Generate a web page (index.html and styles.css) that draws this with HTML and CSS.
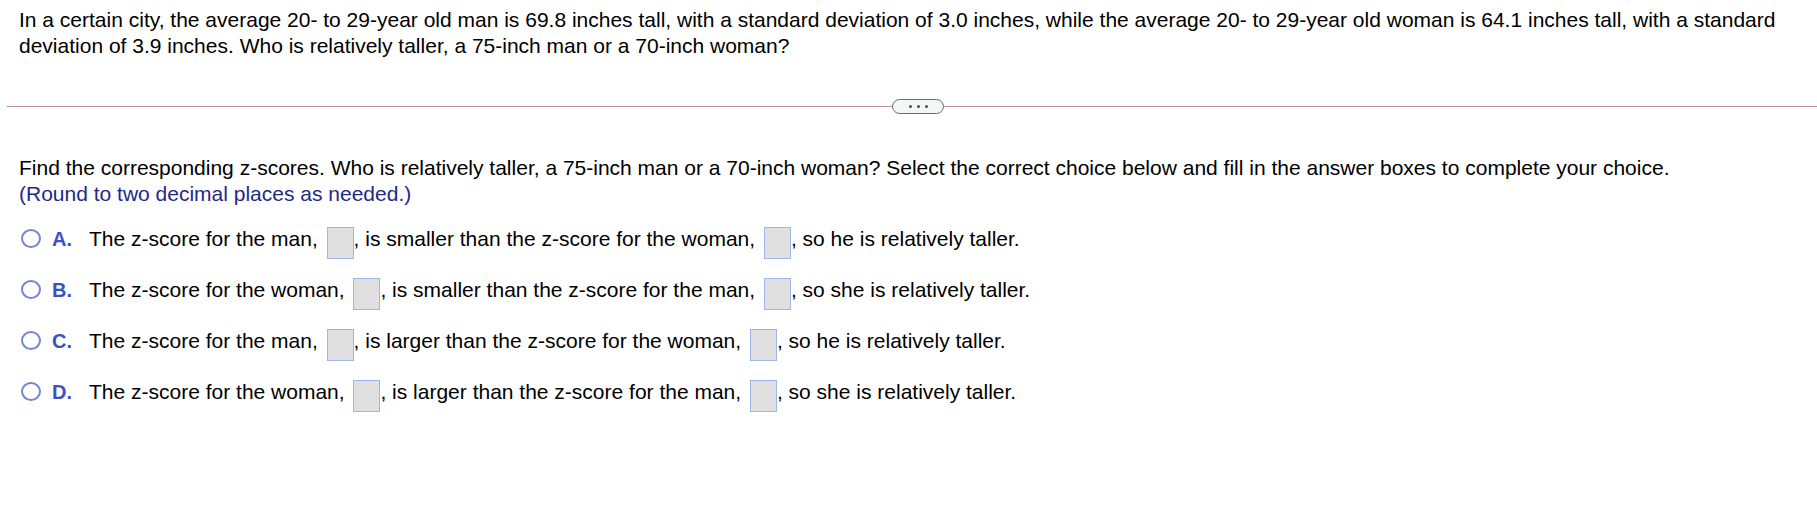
FILE: index.html
```html
<!DOCTYPE html>
<html>
<head>
<meta charset="utf-8">
<link rel="stylesheet" href="styles.css">
</head>
<body>
<div class="page">
  <p class="question">In a certain city, the average 20- to 29-year old man is 69.8 inches tall, with a standard deviation of 3.0 inches, while the average 20- to 29-year old woman is 64.1 inches tall, with a standard deviation of 3.9 inches. Who is relatively taller, a 75-inch man or a 70-inch woman?</p>
  <div class="separator">
    <span class="rule rule-left"></span>
    <span class="pill"><i class="dot"></i><i class="dot"></i><i class="dot"></i></span>
    <span class="rule rule-right"></span>
  </div>
  <div class="part">
    <p class="instruction">Find the corresponding z-scores. Who is relatively taller, a 75-inch man or a 70-inch woman? Select the correct choice below and fill in the answer boxes to complete your choice.<br><span class="hint">(Round to two decimal places as needed.)</span></p>
    <div class="option"><span class="radio"></span><span class="letter">A.</span>The z-score for the man, <span class="box"></span>, is smaller than the z-score for the woman, <span class="box"></span>, so he is relatively taller.</div>
    <div class="option"><span class="radio"></span><span class="letter">B.</span>The z-score for the woman, <span class="box"></span>, is smaller than the z-score for the man, <span class="box"></span>, so she is relatively taller.</div>
    <div class="option"><span class="radio"></span><span class="letter">C.</span>The z-score for the man, <span class="box"></span>, is larger than the z-score for the woman, <span class="box"></span>, so he is relatively taller.</div>
    <div class="option"><span class="radio"></span><span class="letter">D.</span>The z-score for the woman, <span class="box"></span>, is larger than the z-score for the man, <span class="box"></span>, so she is relatively taller.</div>
  </div>
</div>
</body>
</html>
```
FILE: styles.css
```css
html, body {
  margin: 0;
  padding: 0;
  background: #ffffff;
}
body {
  font-family: "Liberation Sans", Arial, sans-serif;
  font-size: 21px;
  color: #000000;
}
.page {
  padding-top: 7px;
}
.question {
  margin: 0;
  padding: 0 19px;
  line-height: 26px;
}
.separator {
  display: flex;
  align-items: center;
  margin-top: 40px;
  padding-left: 7px;
  height: 14px;
}
.rule {
  height: 1px;
  background: #c08ca6;
}
.rule-left {
  flex: 0 0 885px;
}
.rule-right {
  flex: 1;
}
.pill {
  box-sizing: border-box;
  width: 52px;
  height: 15px;
  border: 1px solid #5f6b7a;
  border-radius: 8px;
  background: #f5f6f8;
  display: flex;
  align-items: center;
  justify-content: center;
  gap: 5px;
}
.dot {
  width: 3px;
  height: 3px;
  border-radius: 50%;
  background: #474d57;
}
.part {
  padding: 42px 19px 0 19px;
}
.instruction {
  margin: 0 0 6px 0;
  line-height: 26px;
}
.hint {
  color: #1e2a86;
}
.option {
  height: 51px;
  line-height: 51px;
  white-space: nowrap;
}
.radio {
  display: inline-block;
  box-sizing: border-box;
  width: 20px;
  height: 19px;
  border: 2px solid #7286d2;
  border-radius: 50%;
  margin-left: 2px;
  vertical-align: -2px;
}
.letter {
  display: inline-block;
  font-weight: bold;
  font-size: 20px;
  color: #3b53c2;
  margin-left: 11px;
  width: 37px;
}
.box {
  display: inline-block;
  box-sizing: border-box;
  width: 27px;
  height: 32px;
  background: #e0e0e0;
  border: 1px solid #9fb6ea;
  vertical-align: -13px;
  margin-left: 3px;
}
```
